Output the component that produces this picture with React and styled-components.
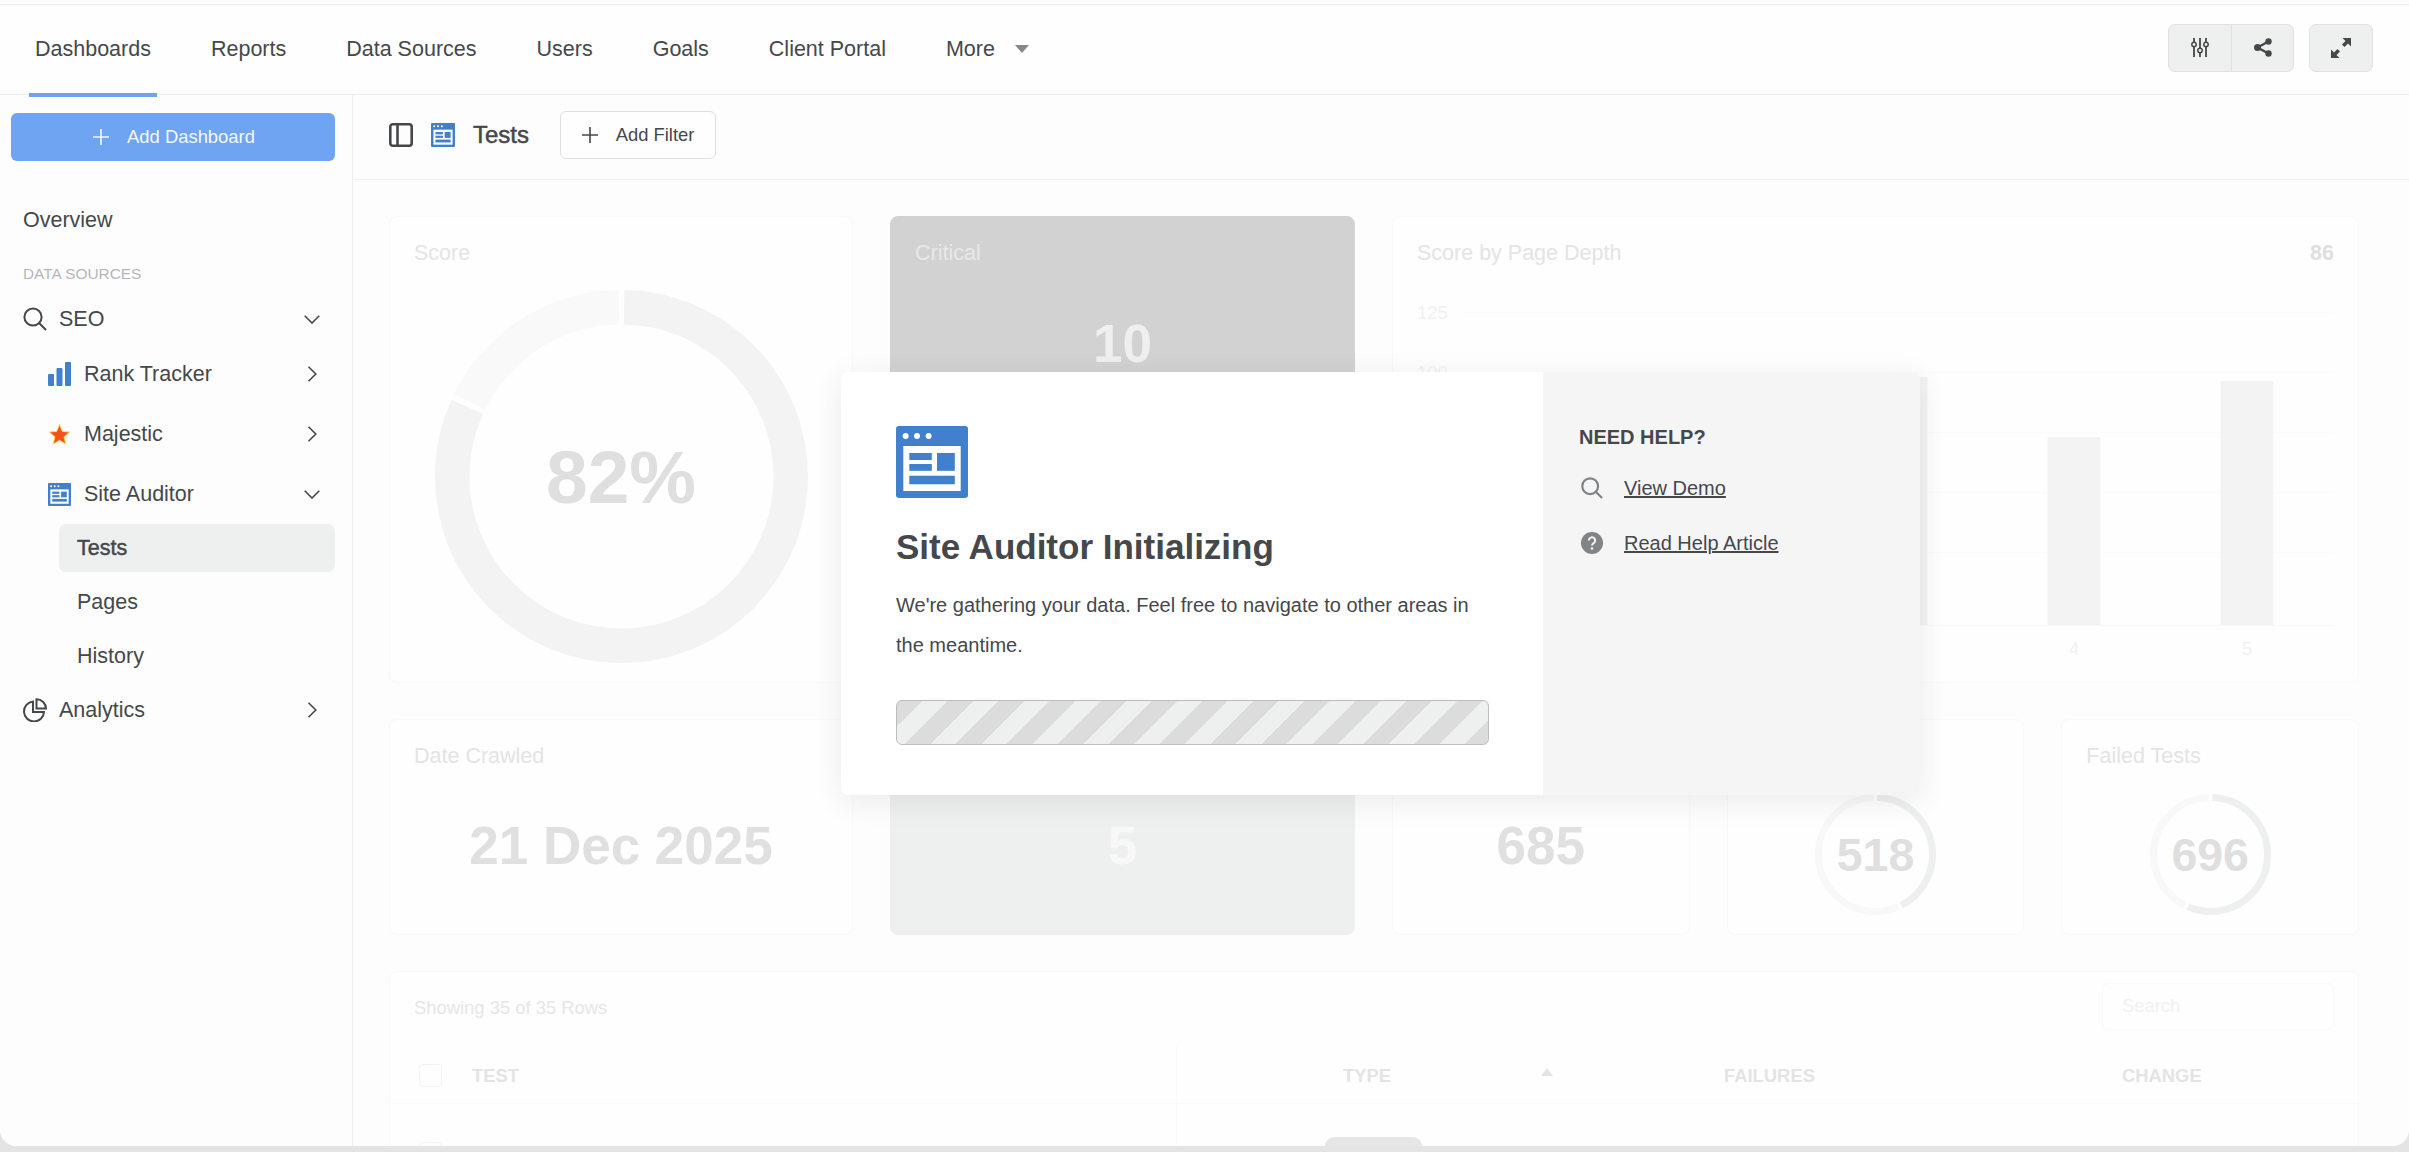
import React from "react";
import styled, { createGlobalStyle } from "styled-components";

const ink = "#45484b";
const blue = "#4080cc";

const Global = createGlobalStyle`
  html, body { margin: 0; padding: 0; background: #e4e4e4; }
  body { font-family: "Liberation Sans", Arial, sans-serif; color: ${ink}; }
  * { box-sizing: border-box; }
`;

const Frame = styled.div`
  position: relative;
  width: 2409px;
  height: 1146px;
  margin-bottom: 6px;
  background: #fdfdfd;
  border-bottom-left-radius: 16px;
  border-bottom-right-radius: 16px;
  overflow: hidden;
  display: flex;
  flex-direction: column;
`;

const Header = styled.header`
  margin-top: 4px;
  height: 91px;
  flex: none;
  background: #fefefe;
  border-top: 1px solid #ececec;
  border-bottom: 1px solid #eeeeee;
  display: flex;
  align-items: stretch;
  padding: 0 36px 0 29px;
`;

const Nav = styled.nav`
  display: flex;
  align-items: stretch;
  gap: 48px;
  flex: 1;
`;

const NavItem = styled.a`
  display: flex;
  align-items: center;
  gap: 20px;
  height: 92px;
  padding: 0 6px;
  font-size: 21.5px;
  color: ${ink};
  border-bottom: 4px solid ${(p) => (p.$active ? "#6ea3f2" : "transparent")};
`;

const Caret = styled.span`
  width: 0;
  height: 0;
  border-left: 7px solid transparent;
  border-right: 7px solid transparent;
  border-top: 8px solid #85888a;
`;

const HeaderActions = styled.div`
  display: flex;
  align-items: center;
  gap: 15px;
  padding-bottom: 4px;
`;

const ButtonGroup = styled.div`
  display: flex;
  height: 48px;
  background: #eef0f0;
  border: 1px solid #e0e1e1;
  border-radius: 7px;
`;

const IconButton = styled.button`
  width: ${(p) => p.$w || 62}px;
  height: 100%;
  padding: 0;
  background: transparent;
  border: 0;
  border-left: ${(p) => (p.$divided ? "1px solid #e0e1e1" : "0")};
  display: flex;
  align-items: center;
  justify-content: center;
  color: ${ink};
`;

const Body = styled.div`
  flex: 1;
  min-height: 0;
  display: flex;
`;

const Sidebar = styled.aside`
  width: 353px;
  flex: none;
  padding: 18px 17px 0 11px;
  border-right: 1px solid #f0f0f0;
  display: flex;
  flex-direction: column;
`;

const AddDashboard = styled.button`
  height: 48px;
  flex: none;
  border: 0;
  border-radius: 6px;
  background: #6fa4f3;
  color: #f4f8ff;
  font: 18.4px "Liberation Sans", Arial, sans-serif;
  display: flex;
  align-items: center;
  justify-content: center;
  gap: 18px;
  padding-right: 4px;
  margin-bottom: 35px;
`;

const Row = styled.div`
  height: ${(p) => p.$h || 48}px;
  flex: none;
  margin-top: ${(p) => p.$mt || 0}px;
  padding-left: ${(p) => p.$indent ?? 12}px;
  padding-right: 15px;
  display: flex;
  align-items: center;
  gap: ${(p) => p.$gap ?? 12}px;
  font-size: 21.5px;
  color: ${ink};
`;

const RowLabel = styled.span`
  flex: 1;
`;

const SectionLabel = styled.div`
  height: 20px;
  margin-top: 20px;
  margin-bottom: 10px;
  padding-left: 12px;
  font-size: 15.4px;
  line-height: 20px;
  color: #b5b7b9;
`;

const SubItem = styled.div`
  height: 48px;
  flex: none;
  margin-left: 48px;
  margin-top: ${(p) => p.$mt || 0}px;
  padding-left: 18px;
  display: flex;
  align-items: center;
  font-size: 21.5px;
  border-radius: 7px;
  color: ${ink};
  background: ${(p) => (p.$active ? "#eef0f0" : "transparent")};
  -webkit-text-stroke: ${(p) => (p.$active ? "0.5px" : "0")};
`;

const Main = styled.main`
  flex: 1;
  min-width: 0;
  display: flex;
  flex-direction: column;
`;

const Toolbar = styled.div`
  height: 85px;
  flex: none;
  padding: 0 0 5px 36px;
  border-bottom: 1px solid #efefef;
  display: flex;
  align-items: center;
`;

const ToolbarTitle = styled.h1`
  margin: 0 31px 0 18px;
  font-size: 24px;
  font-weight: 400;
  -webkit-text-stroke: 0.5px;
  color: ${ink};
`;

const AddFilter = styled.button`
  width: 156px;
  height: 48px;
  background: #fefefe;
  border: 1px solid #dfdfdf;
  border-radius: 6px;
  color: ${ink};
  font: 18.4px "Liberation Sans", Arial, sans-serif;
  display: flex;
  align-items: center;
  justify-content: center;
  gap: 18px;
`;

const Dashboard = styled.div`
  flex: 1;
  padding: 36px 50px 0 36px;
  display: flex;
  flex-direction: column;
  gap: 36px;
  overflow: hidden;
`;

const CardRow = styled.div`
  display: flex;
  gap: 37px;
  height: ${(p) => p.$h}px;
  flex: none;
`;

const Card = styled.section`
  flex: ${(p) => (p.$w ? "none" : "1")};
  width: ${(p) => (p.$w ? `${p.$w}px` : "auto")};
  min-width: 0;
  border: 1px solid ${(p) => (p.$fill ? p.$fill : "#f9f9f9")};
  border-radius: 8px;
  background: ${(p) => p.$fill || "#fefefe"};
  padding: 23px 24px;
  display: flex;
  flex-direction: column;
  position: relative;
`;

const CardHead = styled.div`
  display: flex;
  justify-content: space-between;
  height: 26px;
  line-height: 26px;
  font-size: 21.5px;
  color: ${(p) => p.$color || "#e4e4e4"};
`;

const CardCorner = styled.b`
  color: #dfdfdf;
`;

const BigValue = styled.div`
  margin-top: ${(p) => p.$mt || 47}px;
  text-align: center;
  font-size: ${(p) => p.$size || 53}px;
  line-height: 60px;
  font-weight: 700;
  color: ${(p) => p.$color || "#e0e0e0"};
`;

const RingWrap = styled.div`
  margin: ${(p) => p.$mt}px auto 0;
  width: ${(p) => p.$size}px;
  height: ${(p) => p.$size}px;
  display: grid;
  place-items: center;
  & > * { grid-area: 1 / 1; }
`;

const RingValue = styled.span`
  font-size: ${(p) => p.$size}px;
  font-weight: 700;
  color: #dfdfdf;
`;

const Ring = ({ size, stroke, pct, dark, light, gap }) => {
  const r = (size - stroke) / 2;
  const c = size / 2;
  return (
    <svg width={size} height={size} viewBox={`0 0 ${size} ${size}`}>
      <g transform={`rotate(-90 ${c} ${c})`} fill="none" strokeWidth={stroke}>
        <circle cx={c} cy={c} r={r} pathLength="100" stroke={dark} strokeDasharray={`${pct - gap} ${100 - pct + gap}`} strokeDashoffset={-gap / 2} />
        <circle cx={c} cy={c} r={r} pathLength="100" stroke={light} strokeDasharray={`${100 - pct - gap} ${pct + gap}`} strokeDashoffset={-pct - gap / 2} />
      </g>
    </svg>
  );
};

const ChartSvg = styled.svg`
  position: absolute;
  left: 0;
  top: 63px;
`;

const Chart = () => {
  const bars = [[162, 120], [335, 300], [508, 97], [681, 157], [854, 101]];
  return (
    <ChartSvg width="964" height="400" viewBox="0 0 964 400" fontFamily="'Liberation Sans', Arial, sans-serif" fontSize="18.4" fill="#f1f1f1">
      {[125, 100, 75, 50, 25].map((v, i) => (
        <g key={v}>
          <text x="24" y={39 + i * 60}>{v}</text>
          <rect x="70" y={32 + i * 60} width="870" height="1" fill="#fbfbfb" />
        </g>
      ))}
      <rect x="24" y="345" width="916" height="1" fill="#f8f8f8" />
      {bars.map(([c, t], i) => (
        <g key={c}>
          <rect x={c - 26.5} y={t - 63 + 63 - 63 + 63} width="53" height={345 - t} fill="#f3f3f3" />
          <text x={c} y="375" textAnchor="middle">{i + 1}</text>
        </g>
      ))}
    </ChartSvg>
  );
};

const TableCard = styled.section`
  flex: none;
  height: 360px;
  border: 1px solid #f9f9f9;
  border-radius: 8px;
  background: #fefefe;
`;

const TableBar = styled.div`
  height: 72px;
  padding: 11px 24px 0 24px;
  display: flex;
  justify-content: space-between;
  font-size: 18.4px;
  color: #e6e6e6;
`;

const ShowingText = styled.span`
  line-height: 50px;
`;

const SearchBox = styled.div`
  width: 232px;
  height: 47px;
  padding-left: 19px;
  border: 1px solid #f9f9f9;
  border-radius: 6px;
  line-height: 44px;
  color: #f1f1f1;
`;

const TableGrid = styled.div`
  display: grid;
  grid-template-columns: 82px 704px 548px 398px 1fr;
`;

const Cell = styled.div`
  display: flex;
  align-items: center;
  height: ${(p) => p.$h}px;
  padding-left: ${(p) => p.$pl || 0}px;
  padding-top: ${(p) => (p.$h === 60 ? 4 : 0)}px;
  border-left: ${(p) => (p.$line ? "1px solid #fafafa" : "0")};
  border-bottom: 1px solid #fafafa;
  font-size: 18.4px;
  font-weight: 700;
  color: #e4e4e4;
`;

const Checkbox = styled.span`
  width: 23px;
  height: 23px;
  border: 1px solid #f3f3f3;
  border-radius: 4px;
  background: #fefefe;
`;

const SortArrow = styled.span`
  margin: -8px 0 0 150px;
  border-left: 6px solid transparent;
  border-right: 6px solid transparent;
  border-bottom: 8px solid #e4e4e4;
`;

const Overlay = styled.div`
  position: absolute;
  left: 841px;
  top: 372px;
  width: 1079px;
  height: 423px;
  display: flex;
  border-radius: 7px;
  background: #fff;
  box-shadow: 0 6px 30px rgba(40, 45, 50, 0.09);
  overflow: hidden;
`;

const ModalMain = styled.div`
  width: 702px;
  flex: none;
  padding: 54px 0 0 55px;
  background: #fff;
`;

const ModalTitle = styled.h2`
  margin: 23px 0 16px;
  height: 44px;
  line-height: 44px;
  font-size: 35px;
  font-weight: 700;
  color: ${ink};
`;

const ModalText = styled.p`
  margin: 0;
  width: 593px;
  font-size: 20px;
  line-height: 40px;
  color: ${ink};
`;

const Progress = styled.div`
  margin-top: 35px;
  width: 593px;
  height: 45px;
  border: 1px solid #bcbdbf;
  border-radius: 6px;
  background: repeating-linear-gradient(135deg, #dcdcdc 0 18px, #eef0f0 18px 36px);
`;

const ModalAside = styled.div`
  flex: 1;
  padding: 52px 0 0 36px;
  background: #f5f5f5;
`;

const HelpTitle = styled.div`
  height: 26px;
  line-height: 26px;
  font-size: 20px;
  font-weight: 700;
  color: ${ink};
  margin-bottom: 18px;
`;

const HelpLink = styled.div`
  height: 40px;
  margin-bottom: 15px;
  padding-left: 2px;
  display: flex;
  align-items: center;
  gap: 21px;
  font-size: 20px;
  text-decoration: underline;
  color: ${ink};
`;

const Handle = styled.div`
  position: absolute;
  left: 1325px;
  bottom: 0;
  width: 97px;
  height: 9px;
  background: #e6e6e6;
  border-radius: 14px 14px 0 0;
`;

const SiteIcon = ({ size }) => (
  <svg width={size} height={size} viewBox="0 0 72 72">
    <rect width="72" height="72" rx="3" fill={blue} />
    <circle cx="9.6" cy="10" r="3" fill="#fff" />
    <circle cx="21" cy="10" r="3" fill="#fff" />
    <circle cx="32.6" cy="10" r="3" fill="#fff" />
    <rect x="7.3" y="20" width="57.4" height="45" fill="#fff" />
    <rect x="13.3" y="27" width="22.5" height="7" fill={blue} />
    <rect x="13.3" y="38" width="22.5" height="6.8" fill={blue} />
    <rect x="41" y="27" width="17.8" height="17.8" fill={blue} />
    <rect x="13.3" y="49.7" width="45.5" height="8.6" fill={blue} />
  </svg>
);

const PlusIcon = ({ color }) => (
  <svg width="16" height="16" viewBox="0 0 16 16" stroke={color} strokeWidth="1.6">
    <path d="M8 0v16M0 8h16" />
  </svg>
);

const ChevronDown = () => (
  <svg width="16" height="9" viewBox="0 0 16 9" fill="none" stroke={ink} strokeWidth="1.6">
    <path d="M.7.7 8 8l7.3-7.3" />
  </svg>
);

const ChevronRight = () => (
  <svg width="16" height="16" viewBox="0 0 16 16" fill="none" stroke={ink} strokeWidth="1.6">
    <path d="M4.5.8 11.8 8l-7.3 7.2" />
  </svg>
);

const SearchIcon = ({ size, color, width }) => (
  <svg width={size} height={size} viewBox="0 0 24 24" fill="none" stroke={color} strokeWidth={width}>
    <circle cx="10" cy="10" r="8.6" />
    <path d="m16.3 16.3 6.7 6.7" />
  </svg>
);

const BarsIcon = () => (
  <svg width="23" height="24" viewBox="0 0 23 24" fill={blue}>
    <rect x="0" y="12" width="6" height="12" rx="1" />
    <rect x="8.5" y="6" width="6" height="18" rx="1" />
    <rect x="17" y="0" width="6" height="24" rx="1" />
  </svg>
);

const StarIcon = () => (
  <svg width="23" height="23" viewBox="0 0 24 24">
    <path d="M12 1.5l3 7.3 7.8.6-6 5.1 1.9 7.6L12 18.1 5.300 22.100l1.900-7.600-6-5.100 7.800-.6z" fill="#f4511e" stroke="#ffe25a" strokeWidth="1" />
  </svg>
);

const PieIcon = () => (
  <svg width="24" height="24" viewBox="0 0 24 24" fill="none" stroke={ink} strokeWidth="2">
    <path d="M10 3.500A10 10 0 1 0 21 14H10z" />
    <path d="M13.500 1.200A9.500 9.500 0 0 1 23 10.500h-9.500z" />
  </svg>
);

const PanelIcon = () => (
  <svg width="24" height="24" viewBox="0 0 24 24" fill="none" stroke={ink} strokeWidth="2.600">
    <rect x="1.300" y="1.300" width="21.400" height="21.400" rx="2.500" />
    <path d="M8.500 1v22" />
  </svg>
);

const SlidersIcon = () => (
  <svg width="18" height="19" viewBox="0 0 18 19" fill="#fff" stroke={ink} strokeWidth="1.500">
    <path d="M3 0v4M3 9v10M9 0v10M9 15v4M15 0v4M15 9v10" fill="none" strokeWidth="1.800" />
    <circle cx="3" cy="6.500" r="2.200" fill="none" />
    <circle cx="9" cy="12.500" r="2.200" fill="none" />
    <circle cx="15" cy="6.500" r="2.200" fill="none" />
  </svg>
);

const ShareIcon = () => (
  <svg width="18" height="19" viewBox="0 0 18 19" fill={ink} stroke={ink}>
    <path d="M14.500 3.500 3.500 9.500l11 6" fill="none" strokeWidth="2.400" />
    <circle cx="14.500" cy="3.500" r="3.200" stroke="none" />
    <circle cx="3.500" cy="9.500" r="3.500" stroke="none" />
    <circle cx="14.500" cy="15.500" r="3.200" stroke="none" />
  </svg>
);

const ExpandIcon = () => (
  <svg width="20" height="20" viewBox="0 0 20 20" fill={ink}>
    <path d="M11.500 0H20v8.500l-3-3-3.500 3.500-2.500-2.500L14.500 3z" />
    <path d="M8.500 20H0v-8.500l3 3 3.500-3.500L9 13.500 5.500 17z" />
  </svg>
);

const HelpIcon = () => (
  <svg width="22" height="22" viewBox="0 0 22 22">
    <circle cx="11" cy="11" r="11" fill="#808486" />
    <path d="M7.800 8.500a3.200 3.200 0 1 1 4.900 2.700c-1 .6-1.700 1.200-1.700 2.300" fill="none" stroke="#f5f5f5" strokeWidth="2" />
    <circle cx="11" cy="16.500" r="1.300" fill="#f5f5f5" />
  </svg>
);

export default function App() {
  return (
    <>
      <Global />
      <Frame>
        <Header>
          <Nav>
            <NavItem $active>Dashboards</NavItem>
            <NavItem>Reports</NavItem>
            <NavItem>Data Sources</NavItem>
            <NavItem>Users</NavItem>
            <NavItem>Goals</NavItem>
            <NavItem>Client Portal</NavItem>
            <NavItem>More <Caret /></NavItem>
          </Nav>
          <HeaderActions>
            <ButtonGroup>
              <IconButton><SlidersIcon /></IconButton>
              <IconButton $divided><ShareIcon /></IconButton>
            </ButtonGroup>
            <ButtonGroup>
              <IconButton><ExpandIcon /></IconButton>
            </ButtonGroup>
          </HeaderActions>
        </Header>
        <Body>
          <Sidebar>
            <AddDashboard><PlusIcon color="#f4f8ff" />Add Dashboard</AddDashboard>
            <Row>Overview</Row>
            <SectionLabel>DATA SOURCES</SectionLabel>
            <Row $h={50}><SearchIcon size={24} color={ink} width={2} /><RowLabel>SEO</RowLabel><ChevronDown /></Row>
            <Row $h={60} $indent={37} $gap={13}><BarsIcon /><RowLabel>Rank Tracker</RowLabel><ChevronRight /></Row>
            <Row $h={60} $indent={37} $gap={13}><StarIcon /><RowLabel>Majestic</RowLabel><ChevronRight /></Row>
            <Row $h={60} $indent={37} $gap={13}><SiteIcon size={23} /><RowLabel>Site Auditor</RowLabel><ChevronDown /></Row>
            <SubItem $active>Tests</SubItem>
            <SubItem $mt={6}>Pages</SubItem>
            <SubItem $mt={6}>History</SubItem>
            <Row $mt={6}><PieIcon /><RowLabel>Analytics</RowLabel><ChevronRight /></Row>
          </Sidebar>
          <Main>
            <Toolbar>
              <PanelIcon />
              <ToolbarSpacer />
              <SiteIcon size={24} />
              <ToolbarTitle>Tests</ToolbarTitle>
              <AddFilter><PlusIcon color={ink} />Add Filter</AddFilter>
            </Toolbar>
            <Dashboard>
              <CardRow $h={467}>
                <Card $w={464}>
                  <CardHead>Score</CardHead>
                  <RingWrap $mt={24} $size={373}>
                    <Ring size={373} stroke={34.500} pct={82} dark="#f3f3f3" light="#f9f9f9" gap={0.5} />
                    <RingValue $size={75}>82%</RingValue>
                  </RingWrap>
                </Card>
                <Card $w={465} $fill="#d2d2d2">
                  <CardHead $color="#e8e8e8">Critical</CardHead>
                  <BigValue $mt={48} $color="#efefef">10</BigValue>
                </Card>
                <Card>
                  <CardHead>Score by Page Depth<CardCorner>86</CardCorner></CardHead>
                  <Chart />
                </Card>
              </CardRow>
              <CardRow $h={216}>
                <Card $w={464}>
                  <CardHead>Date Crawled</CardHead>
                  <BigValue>21 Dec 2025</BigValue>
                </Card>
                <Card $w={465} $fill="#eef0ef">
                  <CardHead $color="#f7f7f7">Warnings</CardHead>
                  <BigValue $color="#f8f8f8">5</BigValue>
                </Card>
                <Card>
                  <CardHead>Pages</CardHead>
                  <BigValue>685</BigValue>
                </Card>
                <Card>
                  <CardHead>Passed Tests</CardHead>
                  <RingWrap $mt={25} $size={121}>
                    <Ring size={121} stroke={7} pct={43} dark="#eef0f0" light="#f8f8f8" gap={1} />
                    <RingValue $size={46.500}>518</RingValue>
                  </RingWrap>
                </Card>
                <Card>
                  <CardHead>Failed Tests</CardHead>
                  <RingWrap $mt={25} $size={121}>
                    <Ring size={121} stroke={7} pct={57} dark="#eef0f0" light="#f8f8f8" gap={1} />
                    <RingValue $size={46.500}>696</RingValue>
                  </RingWrap>
                </Card>
              </CardRow>
              <TableCard>
                <TableBar>
                  <ShowingText>Showing 35 of 35 Rows</ShowingText>
                  <SearchBox>Search</SearchBox>
                </TableBar>
                <TableGrid>
                  <Cell $h={60} $pl={29}><Checkbox /></Cell>
                  <Cell $h={60}>TEST</Cell>
                  <Cell $h={60} $line $pl={166}>TYPE<SortArrow /></Cell>
                  <Cell $h={60}>FAILURES</Cell>
                  <Cell $h={60}>CHANGE</Cell>
                  <Cell $h={100} $pl={29}><Checkbox /></Cell>
                  <Cell $h={100} />
                  <Cell $h={100} $line />
                  <Cell $h={100} />
                  <Cell $h={100} />
                </TableGrid>
              </TableCard>
            </Dashboard>
          </Main>
        </Body>
        <Handle />
        <Overlay>
          <ModalMain>
            <SiteIcon size={72} />
            <ModalTitle>Site Auditor Initializing</ModalTitle>
            <ModalText>We're gathering your data. Feel free to navigate to other areas in the meantime.</ModalText>
            <Progress />
          </ModalMain>
          <ModalAside>
            <HelpTitle>NEED HELP?</HelpTitle>
            <HelpLink><SearchIcon size={22} color="#808486" width={2.400} />View Demo</HelpLink>
            <HelpLink><HelpIcon />Read Help Article</HelpLink>
          </ModalAside>
        </Overlay>
      </Frame>
    </>
  );
}

const ToolbarSpacer = styled.span`
  width: 18px;
  flex: none;
`;
